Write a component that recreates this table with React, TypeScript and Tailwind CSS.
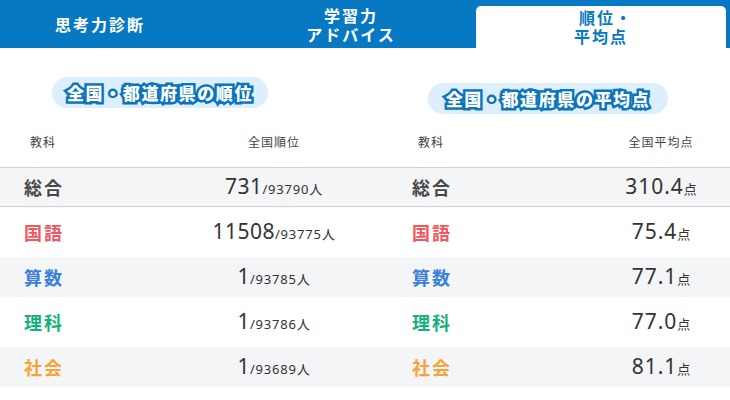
import React from 'react';

interface Row {
  label: string;
  color: string;
  rank: string;
  total: string;
  avg: string;
  bg: string;
  h: string;
}

const rows: Row[] = [
  { label: '総合', color: 'text-[#474747]', rank: '731', total: '93790', avg: '310.4', bg: 'bg-[#f4f5f7] border-y border-[#cfcfcf]', h: 'h-[40px]' },
  { label: '国語', color: 'text-[#f2575f]', rank: '11508', total: '93775', avg: '75.4', bg: 'bg-white', h: 'h-[50px]' },
  { label: '算数', color: 'text-[#3b7fdb]', rank: '1', total: '93785', avg: '77.1', bg: 'bg-[#f4f5f7]', h: 'h-[40px]' },
  { label: '理科', color: 'text-[#14b27a]', rank: '1', total: '93786', avg: '77.0', bg: 'bg-white', h: 'h-[50px]' },
  { label: '社会', color: 'text-[#f6a43a]', rank: '1', total: '93689', avg: '81.1', bg: 'bg-[#f4f5f7]', h: 'h-[40px]' },
];

const jp = "font-['Noto_Sans_CJK_JP',sans-serif]";
const num = "font-['Noto_Sans','Noto_Sans_CJK_JP',sans-serif]";

const Badge = ({ text, className }: { text: string; className: string }) => (
  <div className={`h-[31px] rounded-full bg-[#ddeefc] flex items-center justify-center ${className}`}>
    <span
      className={`${jp} text-[17px] font-black tracking-[1.6px] leading-none text-white [-webkit-text-stroke:5px_#0a74bd] [paint-order:stroke_fill]`}
    >
      {text}
    </span>
  </div>
);

const App = () => {
  return (
    <div className={`w-[730px] h-[400px] overflow-hidden bg-white ${jp}`}>
      {/* tabs */}
      <div className="h-12 bg-[#0679c2] flex items-end">
        <div className="w-[226px] pr-[26px] h-full flex items-center justify-center text-white text-[16px] font-bold tracking-[2px]">
          思考力診断
        </div>
        <div className="w-[250px] h-full flex items-center justify-center pt-[2px]">
          <p className="text-center text-white text-[16px] font-bold tracking-[2px] leading-[19px]">
            学習力
            <br />
            アドバイス
          </p>
        </div>
        <div className="w-[250px] h-[42px] bg-white rounded-t-[5px] flex items-center justify-center">
          <p className="text-center text-[#0679c2] text-[16px] font-bold tracking-[2px] leading-[19px]">
            <span className="pl-[10px]">順位・</span>
            <br />
            平均点
          </p>
        </div>
      </div>

      <div className="flex">
        {/* ranking */}
        <div className="w-[388px] shrink-0">
          <div className="h-[80px] pt-[29px]">
            <Badge text="全国・都道府県の順位" className="ml-[52px] w-[216px]" />
          </div>
          <div className="h-[39px] grid grid-cols-[86px_1fr] pt-[5px] text-[12px] text-[#444] tracking-[1px]">
            <div className="text-center">教科</div>
            <div className="pl-[74px] text-center">全国順位</div>
          </div>
          {rows.map((r) => (
            <div key={r.label} className={`grid grid-cols-[86px_1fr] items-center ${r.bg} ${r.h}`}>
              <div className={`text-center text-[18px] font-bold tracking-[2px] pl-[2px] ${r.color}`}>{r.label}</div>
              <div className={`pl-[74px] text-center text-[#333] ${num}`}>
                <span className="text-[21px] tracking-[0.5px]">{r.rank}</span>
                <span className="text-[13px] tracking-[0.8px]">/{r.total}人</span>
              </div>
            </div>
          ))}
        </div>

        {/* average */}
        <div className="w-[342px] shrink-0">
          <div className="h-[80px] pt-[35px]">
            <Badge text="全国・都道府県の平均点" className="ml-[40px] w-[240px]" />
          </div>
          <div className="h-[39px] grid grid-cols-[86px_1fr] pt-[5px] text-[12px] text-[#444] tracking-[1px]">
            <div className="text-center">教科</div>
            <div className="pl-[118px] text-center">全国平均点</div>
          </div>
          {rows.map((r) => (
            <div key={r.label} className={`grid grid-cols-[86px_1fr] items-center ${r.bg} ${r.h}`}>
              <div className={`text-center text-[18px] font-bold tracking-[2px] pl-[2px] ${r.color}`}>{r.label}</div>
              <div className={`pl-[118px] text-center text-[#333] ${num}`}>
                <span className="text-[21px] tracking-[1px]">{r.avg}</span>
                <span className="text-[13px]">点</span>
              </div>
            </div>
          ))}
        </div>
      </div>
    </div>
  );
};

export default App;
